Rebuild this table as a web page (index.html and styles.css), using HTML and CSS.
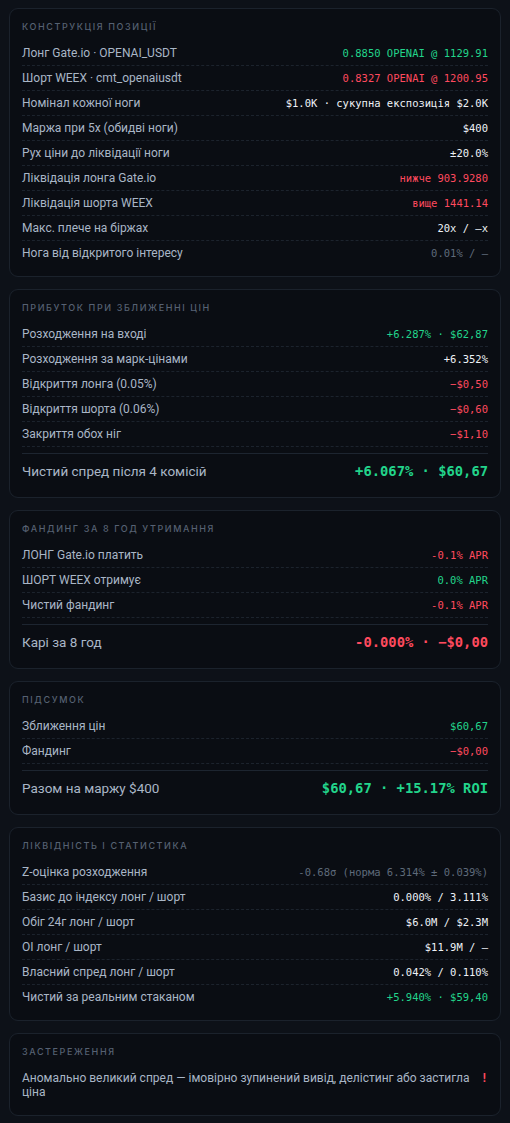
FILE: index.html
```html
<!DOCTYPE html>
<html lang="uk">
<head>
    <meta charset="UTF-8">
    <title>Арбітраж спреду | OPENAI</title>
    <link rel="stylesheet" href="styles.css">
</head>
<body>
    <div class="page">

        <section class="card">
            <h2 class="card-title">Конструкція позиції</h2>
            <div class="rows">
                <div class="row"><span class="label">Лонг Gate.io · OPENAI_USDT</span><span class="value green">0.8850 OPENAI @ 1129.91</span></div>
                <div class="row"><span class="label">Шорт WEEX · cmt_openaiusdt</span><span class="value red">0.8327 OPENAI @ 1200.95</span></div>
                <div class="row"><span class="label">Номінал кожної ноги</span><span class="value">$1.0K · сукупна експозиція $2.0K</span></div>
                <div class="row"><span class="label">Маржа при 5x (обидві ноги)</span><span class="value">$400</span></div>
                <div class="row"><span class="label">Рух ціни до ліквідації ноги</span><span class="value">±20.0%</span></div>
                <div class="row"><span class="label">Ліквідація лонга Gate.io</span><span class="value red">нижче 903.9280</span></div>
                <div class="row"><span class="label">Ліквідація шорта WEEX</span><span class="value red">вище 1441.14</span></div>
                <div class="row"><span class="label">Макс. плече на біржах</span><span class="value">20x / —x</span></div>
                <div class="row"><span class="label">Нога від відкритого інтересу</span><span class="value muted">0.01% / —</span></div>
            </div>
        </section>

        <section class="card">
            <h2 class="card-title">Прибуток при зближенні цін</h2>
            <div class="rows">
                <div class="row"><span class="label">Розходження на вході</span><span class="value green">+6.287% · $62,87</span></div>
                <div class="row"><span class="label">Розходження за марк-цінами</span><span class="value">+6.352%</span></div>
                <div class="row"><span class="label">Відкриття лонга (0.05%)</span><span class="value red">−$0,50</span></div>
                <div class="row"><span class="label">Відкриття шорта (0.06%)</span><span class="value red">−$0,60</span></div>
                <div class="row"><span class="label">Закриття обох ніг</span><span class="value red">−$1,10</span></div>
                <div class="total"><span class="label">Чистий спред після 4 комісій</span><span class="value green">+6.067% · $60,67</span></div>
            </div>
        </section>

        <section class="card">
            <h2 class="card-title">Фандинг за 8 год утримання</h2>
            <div class="rows">
                <div class="row"><span class="label">ЛОНГ Gate.io платить</span><span class="value red">-0.1% APR</span></div>
                <div class="row"><span class="label">ШОРТ WEEX отримує</span><span class="value green">0.0% APR</span></div>
                <div class="row"><span class="label">Чистий фандинг</span><span class="value red">-0.1% APR</span></div>
                <div class="total"><span class="label">Карі за 8 год</span><span class="value red">-0.000% · −$0,00</span></div>
            </div>
        </section>

        <section class="card">
            <h2 class="card-title">Підсумок</h2>
            <div class="rows">
                <div class="row"><span class="label">Зближення цін</span><span class="value green">$60,67</span></div>
                <div class="row"><span class="label">Фандинг</span><span class="value red">−$0,00</span></div>
                <div class="total"><span class="label">Разом на маржу $400</span><span class="value green">$60,67 · +15.17% ROI</span></div>
            </div>
        </section>

        <section class="card">
            <h2 class="card-title">Ліквідність і статистика</h2>
            <div class="rows">
                <div class="row"><span class="label">Z-оцінка розходження</span><span class="value muted">-0.68σ (норма 6.314% ± 0.039%)</span></div>
                <div class="row"><span class="label">Базис до індексу лонг / шорт</span><span class="value">0.000% / 3.111%</span></div>
                <div class="row"><span class="label">Обіг 24г лонг / шорт</span><span class="value">$6.0M / $2.3M</span></div>
                <div class="row"><span class="label">OI лонг / шорт</span><span class="value">$11.9M / —</span></div>
                <div class="row"><span class="label">Власний спред лонг / шорт</span><span class="value">0.042% / 0.110%</span></div>
                <div class="row"><span class="label">Чистий за реальним стаканом</span><span class="value green">+5.940% · $59,40</span></div>
            </div>
        </section>

        <section class="card">
            <h2 class="card-title">Застереження</h2>
            <div class="rows">
                <div class="warning">
                    <span class="warning-text">Аномально великий спред — імовірно зупинений вивід, делістинг або застигла ціна</span>
                    <span class="warning-mark">!</span>
                </div>
            </div>
        </section>

    </div>
</body>
</html>
```

FILE: styles.css
```css
html, body {
    margin: 0;
    padding: 0;
    background-color: #0d1118;
    color: #a9b6c6;
    font-family: Roboto, "Noto Sans", "DejaVu Sans", sans-serif;
}

.page {
    display: flex;
    flex-direction: column;
    gap: 12px;
    padding: 8px 9px;
}

.card {
    background-color: #0a0d13;
    border: 1px solid #1b222c;
    border-radius: 9px;
    padding: 12px 12px 11px;
}

.card-title {
    margin: 0 0 8px;
    font-family: Inter, sans-serif;
    font-size: 9px;
    line-height: 12px;
    font-weight: 500;
    letter-spacing: 1.6px;
    text-transform: uppercase;
    color: #566172;
}

.row {
    display: flex;
    justify-content: space-between;
    align-items: center;
    height: 24px;
    border-bottom: 1px dashed #1c232d;
}

.rows .row:last-child {
    border-bottom: none;
}

.label {
    font-size: 12px;
    color: #a9b6c6;
}

.value {
    font-family: "DejaVu Sans Mono", "Liberation Mono", monospace;
    font-size: 10.5px;
    color: #eef2f7;
    white-space: nowrap;
}

.green {
    color: #22d48b;
}

.red {
    color: #ff4a5e;
}

.muted {
    color: #5e6a7a;
}

.total {
    display: flex;
    justify-content: space-between;
    align-items: center;
    margin-top: 6px;
    border-top: 1px solid #1d2530;
    padding: 8px 0 6px;
    line-height: 18px;
}

.total .label {
    font-size: 13.5px;
}

.total .value {
    font-size: 13.8px;
    font-weight: bold;
}

.warning {
    display: flex;
    align-items: flex-start;
    gap: 6px;
    padding: 5px 0;
}

.warning-text {
    flex: 1;
    font-size: 12px;
    line-height: 14px;
    color: #a9b6c6;
}

.warning-mark {
    font-family: "DejaVu Sans Mono", monospace;
    font-size: 12px;
    line-height: 14px;
    font-weight: bold;
    color: #ff4a5e;
}
```
